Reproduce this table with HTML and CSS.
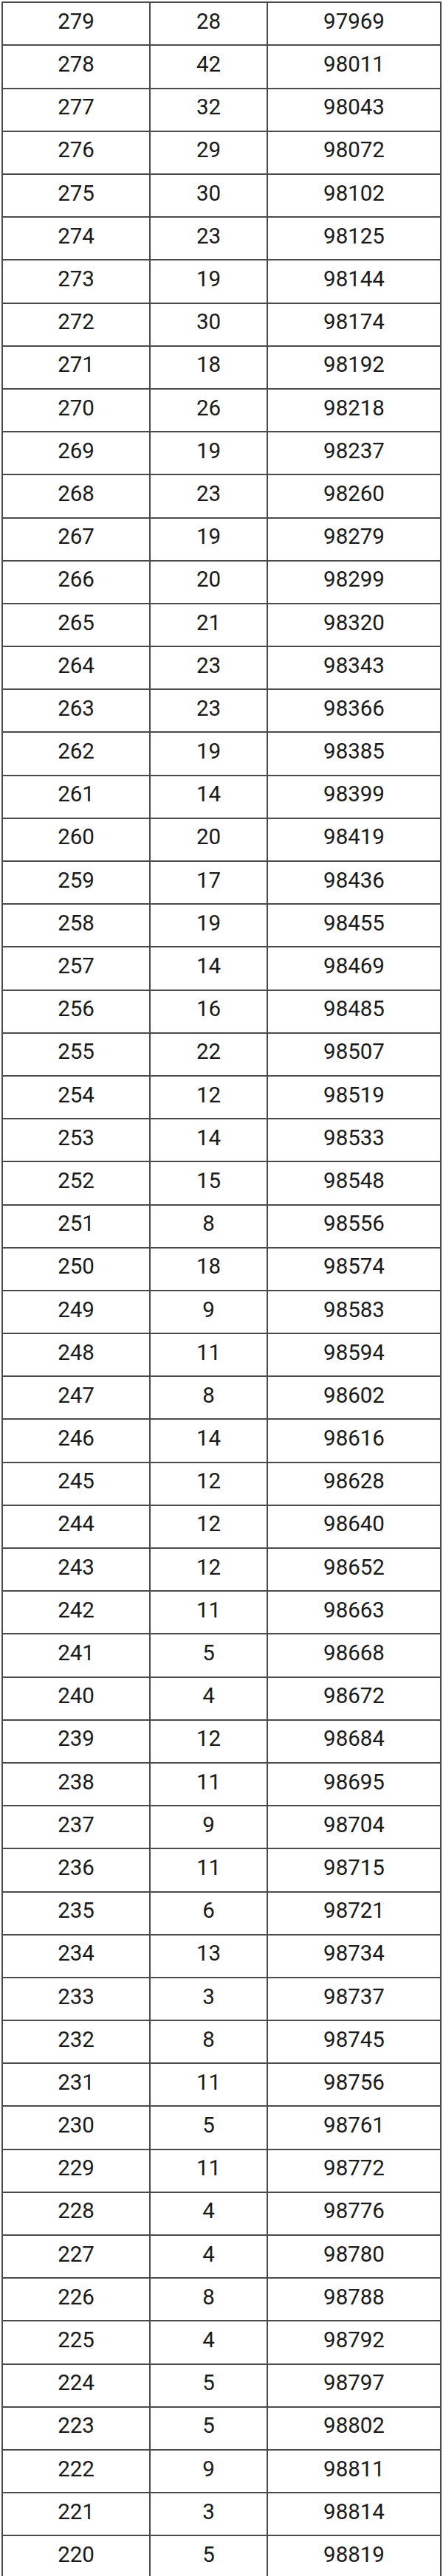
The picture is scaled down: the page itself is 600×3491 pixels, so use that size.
FILE: index.html
```html
<!DOCTYPE html>
<html>
<head>
<meta charset="utf-8">
<link rel="stylesheet" href="styles.css">
</head>
<body>
<div class="grid">
<div class="cell">279</div><div class="cell">28</div><div class="cell">97969</div>
<div class="cell">278</div><div class="cell">42</div><div class="cell">98011</div>
<div class="cell">277</div><div class="cell">32</div><div class="cell">98043</div>
<div class="cell">276</div><div class="cell">29</div><div class="cell">98072</div>
<div class="cell">275</div><div class="cell">30</div><div class="cell">98102</div>
<div class="cell">274</div><div class="cell">23</div><div class="cell">98125</div>
<div class="cell">273</div><div class="cell">19</div><div class="cell">98144</div>
<div class="cell">272</div><div class="cell">30</div><div class="cell">98174</div>
<div class="cell">271</div><div class="cell">18</div><div class="cell">98192</div>
<div class="cell">270</div><div class="cell">26</div><div class="cell">98218</div>
<div class="cell">269</div><div class="cell">19</div><div class="cell">98237</div>
<div class="cell">268</div><div class="cell">23</div><div class="cell">98260</div>
<div class="cell">267</div><div class="cell">19</div><div class="cell">98279</div>
<div class="cell">266</div><div class="cell">20</div><div class="cell">98299</div>
<div class="cell">265</div><div class="cell">21</div><div class="cell">98320</div>
<div class="cell">264</div><div class="cell">23</div><div class="cell">98343</div>
<div class="cell">263</div><div class="cell">23</div><div class="cell">98366</div>
<div class="cell">262</div><div class="cell">19</div><div class="cell">98385</div>
<div class="cell">261</div><div class="cell">14</div><div class="cell">98399</div>
<div class="cell">260</div><div class="cell">20</div><div class="cell">98419</div>
<div class="cell">259</div><div class="cell">17</div><div class="cell">98436</div>
<div class="cell">258</div><div class="cell">19</div><div class="cell">98455</div>
<div class="cell">257</div><div class="cell">14</div><div class="cell">98469</div>
<div class="cell">256</div><div class="cell">16</div><div class="cell">98485</div>
<div class="cell">255</div><div class="cell">22</div><div class="cell">98507</div>
<div class="cell">254</div><div class="cell">12</div><div class="cell">98519</div>
<div class="cell">253</div><div class="cell">14</div><div class="cell">98533</div>
<div class="cell">252</div><div class="cell">15</div><div class="cell">98548</div>
<div class="cell">251</div><div class="cell">8</div><div class="cell">98556</div>
<div class="cell">250</div><div class="cell">18</div><div class="cell">98574</div>
<div class="cell">249</div><div class="cell">9</div><div class="cell">98583</div>
<div class="cell">248</div><div class="cell">11</div><div class="cell">98594</div>
<div class="cell">247</div><div class="cell">8</div><div class="cell">98602</div>
<div class="cell">246</div><div class="cell">14</div><div class="cell">98616</div>
<div class="cell">245</div><div class="cell">12</div><div class="cell">98628</div>
<div class="cell">244</div><div class="cell">12</div><div class="cell">98640</div>
<div class="cell">243</div><div class="cell">12</div><div class="cell">98652</div>
<div class="cell">242</div><div class="cell">11</div><div class="cell">98663</div>
<div class="cell">241</div><div class="cell">5</div><div class="cell">98668</div>
<div class="cell">240</div><div class="cell">4</div><div class="cell">98672</div>
<div class="cell">239</div><div class="cell">12</div><div class="cell">98684</div>
<div class="cell">238</div><div class="cell">11</div><div class="cell">98695</div>
<div class="cell">237</div><div class="cell">9</div><div class="cell">98704</div>
<div class="cell">236</div><div class="cell">11</div><div class="cell">98715</div>
<div class="cell">235</div><div class="cell">6</div><div class="cell">98721</div>
<div class="cell">234</div><div class="cell">13</div><div class="cell">98734</div>
<div class="cell">233</div><div class="cell">3</div><div class="cell">98737</div>
<div class="cell">232</div><div class="cell">8</div><div class="cell">98745</div>
<div class="cell">231</div><div class="cell">11</div><div class="cell">98756</div>
<div class="cell">230</div><div class="cell">5</div><div class="cell">98761</div>
<div class="cell">229</div><div class="cell">11</div><div class="cell">98772</div>
<div class="cell">228</div><div class="cell">4</div><div class="cell">98776</div>
<div class="cell">227</div><div class="cell">4</div><div class="cell">98780</div>
<div class="cell">226</div><div class="cell">8</div><div class="cell">98788</div>
<div class="cell">225</div><div class="cell">4</div><div class="cell">98792</div>
<div class="cell">224</div><div class="cell">5</div><div class="cell">98797</div>
<div class="cell">223</div><div class="cell">5</div><div class="cell">98802</div>
<div class="cell">222</div><div class="cell">9</div><div class="cell">98811</div>
<div class="cell">221</div><div class="cell">3</div><div class="cell">98814</div>
<div class="cell">220</div><div class="cell">5</div><div class="cell">98819</div>
</div>
</body>
</html>
```
FILE: styles.css
```css
html, body {
  margin: 0;
  padding: 0;
  background: #ffffff;
}
.grid {
  margin: 2.3px 0 0 2px;
  width: 596px;
  box-sizing: border-box;
  padding: 2px;
  background: #4a4a4a;
  display: grid;
  grid-template-columns: 198px 157px 233px;
  grid-auto-rows: 56.19px;
  gap: 2px;
}
.cell {
  background: #ffffff;
  display: flex;
  align-items: center;
  justify-content: center;
  padding-bottom: 7px;
  box-sizing: border-box;
  font-family: Roboto, "Liberation Sans", sans-serif;
  font-size: 29.5px;
  color: #1a1a1a;
}
```
